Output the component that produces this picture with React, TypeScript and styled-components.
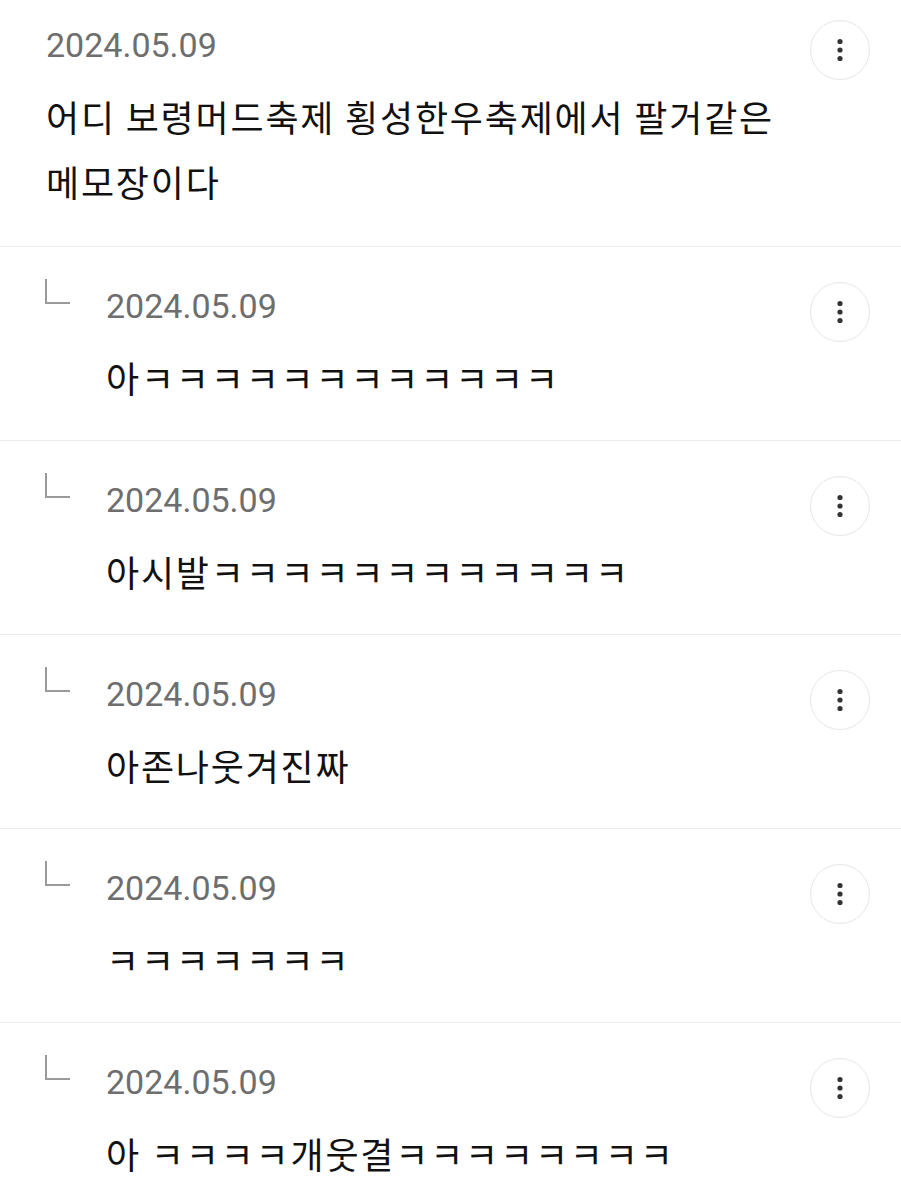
import React from "react";
import styled, { createGlobalStyle } from "styled-components";

const GlobalStyle = createGlobalStyle`
  html, body {
    margin: 0;
    padding: 0;
    background: #ffffff;
  }
  body {
    font-family: "Noto Sans CJK KR", "Noto Sans", sans-serif;
    -webkit-font-smoothing: antialiased;
  }
`;

const List = styled.div`
  display: flex;
  flex-direction: column;
  width: 901px;
`;

const Item = styled.div<{ $reply?: boolean }>`
  display: flex;
  align-items: flex-start;
  padding: ${(p) => (p.$reply ? "35px 31px 0 45px" : "20px 31px 0 46px")};
  min-height: ${(p) => (p.$reply ? "158px" : "225.5px")};
  border-bottom: 1.5px solid #ebebeb;
  box-sizing: content-box;
`;

const ReplyMark = styled.div`
  flex: none;
  width: 25px;
  height: 25px;
  margin: -3px 36px 0 0;
  box-sizing: border-box;
  border-left: 2px solid #9a9a9a;
  border-bottom: 2px solid #9a9a9a;
`;

const Body = styled.div`
  flex: 1;
  display: flex;
  flex-direction: column;
`;

const DateText = styled.div<{ $reply?: boolean }>`
  font-family: Roboto, "Noto Sans", sans-serif;
  font-size: 34px;
  line-height: 40px;
  color: #6e6e6e;
  margin-top: ${(p) => (p.$reply ? "4px" : "5px")};
`;

const Content = styled.div<{ $reply?: boolean }>`
  font-family: "Noto Sans CJK KR", "Noto Sans", sans-serif;
  font-size: 36px;
  letter-spacing: 1.8px;
  line-height: 65px;
  color: #111111;
  margin-top: 19px;
  word-break: keep-all;
`;

const MenuButton = styled.button`
  flex: none;
  width: 60px;
  height: 60px;
  padding: 0;
  border-radius: 50%;
  border: 1.5px solid #e6e6e6;
  background: #ffffff;
  display: flex;
  align-items: center;
  justify-content: center;
  cursor: pointer;
`;

function MoreIcon() {
  return (
    <svg width="6" height="24" viewBox="0 0 6 24" aria-hidden="true">
      <circle cx="3" cy="3.5" r="2.6" fill="#333333" />
      <circle cx="3" cy="12" r="2.6" fill="#333333" />
      <circle cx="3" cy="20.5" r="2.6" fill="#333333" />
    </svg>
  );
}

type Comment = { date: string; text: string; reply?: boolean };

const comments: Comment[] = [
  { date: "2024.05.09", text: "어디 보령머드축제 횡성한우축제에서 팔거같은 메모장이다" },
  { date: "2024.05.09", text: "아ㅋㅋㅋㅋㅋㅋㅋㅋㅋㅋㅋㅋ", reply: true },
  { date: "2024.05.09", text: "아시발ㅋㅋㅋㅋㅋㅋㅋㅋㅋㅋㅋㅋ", reply: true },
  { date: "2024.05.09", text: "아존나웃겨진짜", reply: true },
  { date: "2024.05.09", text: "ㅋㅋㅋㅋㅋㅋㅋ", reply: true },
  { date: "2024.05.09", text: "아 ㅋㅋㅋㅋ개웃결ㅋㅋㅋㅋㅋㅋㅋㅋ", reply: true },
];

export default function App() {
  return (
    <>
      <GlobalStyle />
      <List>
        {comments.map((c, i) => (
          <Item key={i} $reply={c.reply}>
            {c.reply && <ReplyMark />}
            <Body>
              <DateText $reply={c.reply}>{c.date}</DateText>
              <Content $reply={c.reply}>{c.text}</Content>
            </Body>
            <MenuButton aria-label="더보기">
              <MoreIcon />
            </MenuButton>
          </Item>
        ))}
      </List>
    </>
  );
}
